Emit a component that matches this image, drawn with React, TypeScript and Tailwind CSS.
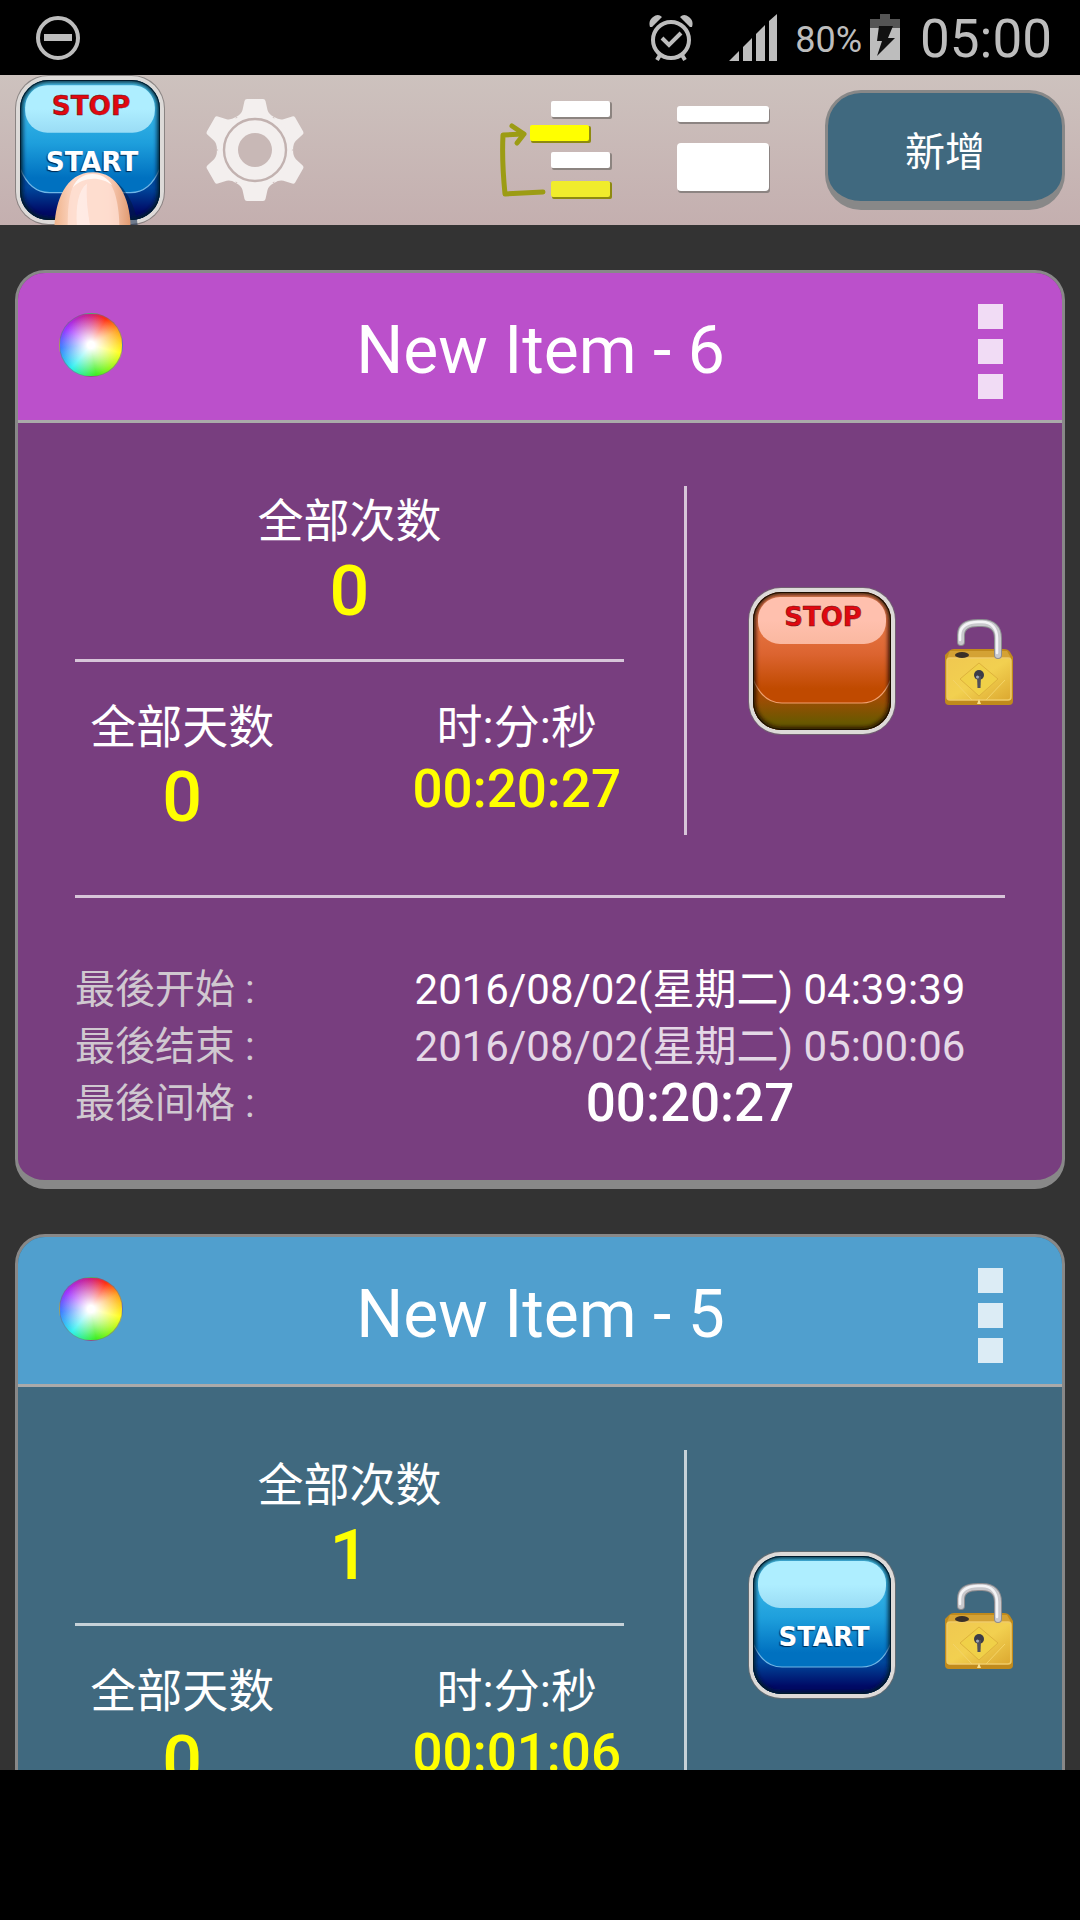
import { useId } from "react";

type Action = "stop" | "start";

interface TimerItem {
  id: number;
  title: string;
  headerClass: string;
  bodyClass: string;
  action: Action;
  count: string;
  days: string;
  time: string;
  last?: { start: string; end: string; interval: string };
}

const items: TimerItem[] = [
  {
    id: 6,
    title: "New Item - 6",
    headerClass: "bg-[#bb50cb]",
    bodyClass: "bg-[#783e7f]",
    action: "stop",
    count: "0",
    days: "0",
    time: "00:20:27",
    last: {
      start: "2016/08/02(星期二) 04:39:39",
      end: "2016/08/02(星期二) 05:00:06",
      interval: "00:20:27",
    },
  },
  {
    id: 5,
    title: "New Item - 5",
    headerClass: "bg-[#509fce]",
    bodyClass: "bg-[#40697f]",
    action: "start",
    count: "1",
    days: "0",
    time: "00:01:06",
  },
];

const palettes = {
  blue: {
    top: "#4cc8f0",
    middle: "#1e9fdc",
    bottom: "#0071c0",
    base: "#00489c",
    baseEnd: "#000a66",
    glossTop: "#aeeeff",
    glossBottom: "#9adcf5",
    curve: "#6fb6e6",
    edge: "#001a2c",
  },
  red: {
    top: "#f08858",
    middle: "#dc6430",
    bottom: "#c04a00",
    base: "#a04c04",
    baseEnd: "#6a5800",
    glossTop: "#ffc0ae",
    glossBottom: "#fab8a0",
    curve: "#f0a070",
    edge: "#1c0c00",
  },
};

/* Glossy square used by the logo and by the start / stop buttons */
function GlossyTile({ color, stop, start, finger }: { color: "blue" | "red"; stop?: boolean; start?: boolean; finger?: boolean }) {
  const id = useId();
  const c = palettes[color];
  return (
    <svg viewBox="0 0 148 148" className="block h-full w-full overflow-hidden">
      <defs>
        <linearGradient id={`${id}face`} x1="0" y1="0" x2="0" y2="1">
          <stop offset="0" stopColor={c.top} />
          <stop offset="0.45" stopColor={c.middle} />
          <stop offset="0.7" stopColor={c.bottom} />
          <stop offset="1" stopColor={c.bottom} />
        </linearGradient>
        <linearGradient id={`${id}base`} x1="0" y1="0" x2="0" y2="1">
          <stop offset="0" stopColor={c.base} />
          <stop offset="0.4" stopColor={c.base} />
          <stop offset="0.85" stopColor={c.baseEnd} />
        </linearGradient>
        <linearGradient id={`${id}gloss`} x1="0" y1="0" x2="0" y2="1">
          <stop offset="0" stopColor={c.glossTop} />
          <stop offset="0.5" stopColor={c.glossTop} />
          <stop offset="1" stopColor={c.glossBottom} />
        </linearGradient>
        <linearGradient id={`${id}skin`} x1="0" y1="0" x2="1" y2="0">
          <stop offset="0" stopColor="#f0b48c" />
          <stop offset="0.25" stopColor="#fcd6c4" />
          <stop offset="0.7" stopColor="#fbd0bc" />
          <stop offset="1" stopColor="#e09a70" />
        </linearGradient>
        <clipPath id={`${id}clip`}>
          <rect x="5" y="5" width="138" height="138" rx="28" />
        </clipPath>
        <filter id={`${id}soft`} x="-10%" y="-10%" width="120%" height="120%">
          <feGaussianBlur stdDeviation="2" />
        </filter>
      </defs>
      <rect x="0" y="0" width="148" height="148" rx="33" fill="#6f6c6c" opacity="0.7" />
      <rect x="1" y="1" width="146" height="146" rx="32" fill="#dddad8" />
      <g clipPath={`url(#${id}clip)`}>
        <rect x="5" y="5" width="138" height="138" fill={`url(#${id}face)`} />
        <path d="M5 90C10 106 20 116 34 116H114C128 116 138 106 143 90V143H5Z" fill={`url(#${id}base)`} />
        <path d="M5 92C11 107 20 116 34 116H114C128 116 137 107 143 92" fill="none" stroke={c.curve} strokeWidth="1.2" />
        <rect x="5" y="5" width="138" height="138" rx="28" fill="none" stroke={c.edge} strokeWidth="5" filter={`url(#${id}soft)`} />
        <rect x="5" y="5" width="138" height="138" rx="28" fill="none" stroke={c.edge} strokeWidth="2" />
      </g>
      <rect x="10" y="10" width="128" height="47" rx="22" fill={`url(#${id}gloss)`} />
      {stop && (
        <text x="75" y="39" textAnchor="middle" className="fill-[#e00810] stroke-[#5c1010] font-['DejaVu_Sans',sans-serif] text-[26px] font-bold" strokeWidth="0.5">
          STOP
        </text>
      )}
      {start && (
        <text x="76" y="95" textAnchor="middle" className="fill-white font-['DejaVu_Sans',sans-serif] text-[26px] font-bold [text-shadow:-1px_1px_1px_rgba(0,20,50,0.8)]">
          START
        </text>
      )}
      {finger && (
        <>
          <path d="M112 148C112 130 106 114 98 104C110 112 120 132 121 148Z" fill="#001a40" opacity="0.5" />
          <path d="M39 148C40 126 49 96 77 96C102 96 113 122 114 148Z" fill={`url(#${id}skin)`} />
          <path d="M52 148C52 118 56 98 77 97C95 98 102 118 103 148Z" fill="#ffe0d4" opacity="0.75" />
          <path d="M57 111C63 94 87 93 96 109C85 100 68 100 57 111Z" fill="#fff8f4" />
          <path d="M61 148C60 130 62 114 71 107C70 122 72 136 74 148Z" fill="#ffeee8" opacity="0.8" />
        </>
      )}
    </svg>
  );
}

function GearIcon() {
  return (
    <svg viewBox="-52 -52 104 104" className="block h-[104px] w-[104px]">
      <g fill="#f3efee">
        {[0, 60, 120, 180, 240, 300].map((deg) => (
          <path
            key={deg}
            transform={`rotate(${deg})`}
            d="M-8 -51Q-10 -51 -10.500 -49L-12.500 -40Q-13.500 -36 -19 -33L0 -25L19 -33Q13.500 -36 12.500 -40L10.500 -49Q10 -51 8 -51Z"
          />
        ))}
        <circle r="37" />
      </g>
      <circle r="17" fill="#c8b8b6" />
      <circle r="31" fill="none" stroke="#c2b2b0" strokeWidth="2.400" />
    </svg>
  );
}

function SortIcon() {
  return (
    <svg viewBox="0 0 114 100" className="block h-[100px] w-[114px]">
      <g fill="#8c8480">
        <rect x="53" y="2" width="60" height="17" rx="2" />
        <rect x="53" y="53" width="60" height="17" rx="2" />
      </g>
      <g fill="#8e8a10">
        <rect x="32" y="26" width="60" height="17" rx="2" />
        <rect x="53" y="82" width="60" height="17" rx="2" />
      </g>
      <rect x="52" y="1" width="59" height="16" rx="2" fill="#fff" />
      <rect x="31" y="25" width="59" height="16" rx="2" fill="#ffff00" />
      <rect x="52" y="52" width="59" height="16" rx="2" fill="#fff" />
      <rect x="52" y="81" width="59" height="16" rx="2" fill="#f0ec2c" />
      <g fill="none" stroke="#9c9c14" strokeWidth="5" strokeLinecap="round" strokeLinejoin="round">
        <path d="M44 92L24 93L6 94C4 74 3 54 4 35L24 34" />
        <path d="M13 26L25 34L18 43" />
      </g>
    </svg>
  );
}

function ListIcon() {
  return (
    <svg viewBox="0 0 94 88" className="block h-[88px] w-[94px]">
      <g fill="#8c8482">
        <rect x="1" y="2" width="92" height="16" rx="3" />
        <rect x="1" y="39" width="92" height="48" rx="3" />
      </g>
      <rect x="0" y="0" width="92" height="16" rx="3" fill="#fff" />
      <rect x="0" y="37" width="92" height="48" rx="4" fill="#fff" />
    </svg>
  );
}

function LockIcon() {
  const id = useId();
  return (
    <svg viewBox="0 0 70 90" className="block h-[90px] w-[70px]">
      <defs>
        <linearGradient id={`${id}gold`} x1="0" y1="0" x2="1" y2="1">
          <stop offset="0" stopColor="#f0c850" />
          <stop offset="0.5" stopColor="#f2d050" />
          <stop offset="1" stopColor="#dca830" />
        </linearGradient>
      </defs>
      <path d="M5 35Q7 33 10 33H60Q64 33 66 36L69 41V85Q69 89 65 89H5Q1 89 1 85V39Z" fill="#c08a1c" />
      <path d="M6 35H63L67 42H3Z" fill="#d4a234" />
      <rect x="3" y="42" width="64" height="42" rx="3" fill={`url(#${id}gold)`} stroke="#efcc68" strokeWidth="1.500" />
      <path d="M35 47L54 63L35 80L16 63Z" fill="#f0d048" stroke="#deb23c" strokeWidth="1" />
      <path d="M9 64L28 84M61 64L42 84" stroke="#f4d468" strokeWidth="1" />
      <path d="M33 88L35 83L37 88Z" fill="#f8e090" />
      <ellipse cx="18" cy="39" rx="7" ry="3" fill="#3a3028" />
      <path d="M17 26V19C17 10 24 7 34 7H38C49 7 54 13 54 22V39" fill="none" stroke="#8c8c90" strokeWidth="8" strokeLinecap="round" />
      <path d="M17 26V19C17 10 24 7 34 7H38C49 7 54 13 54 22V39" fill="none" stroke="#c8c8cc" strokeWidth="6" strokeLinecap="round" />
      <path d="M16 24V19C16 10 24 6 34 6H38C48 6 53 13 53 22V37" fill="none" stroke="#f4f4f6" strokeWidth="2.500" strokeLinecap="round" />
      <circle cx="35" cy="59" r="5" fill="#3c3c48" />
      <path d="M33 60H37L36.500 72H33.500Z" fill="#50505a" />
      <circle cx="33.500" cy="61" r="1.500" fill="#a0a8b8" />
    </svg>
  );
}

function StatusBar() {
  return (
    <div className="flex h-[75px] shrink-0 items-center bg-black pr-7 pl-9 text-[#bdbdbd]">
      <svg viewBox="0 0 44 44" className="h-11 w-11">
        <circle cx="22" cy="22" r="20" fill="none" stroke="currentColor" strokeWidth="4" />
        <rect x="8" y="18" width="28" height="7" fill="currentColor" />
      </svg>
      <div className="flex-1" />
      <svg viewBox="0 0 44 48" className="h-12 w-11">
        <g fill="none" stroke="currentColor" strokeWidth="4">
          <circle cx="22" cy="26" r="18" />
          <path d="M13 24L20 31L32 19" />
          <path d="M11 41L8 46M33 41L36 46" />
        </g>
        <path d="M1 13Q-1 7 4 3Q9 -1 13 3L3 13ZM43 13Q45 7 40 3Q35 -1 31 3L41 13Z" fill="currentColor" />
      </svg>
      <svg viewBox="0 0 48 48" className="ml-9 h-12 w-12" fill="currentColor">
        <path d="M0 47L10 37V47ZM14 33L23 24V47H14ZM27 20L36 11V47H27ZM40 7L48 0V47H40Z" />
      </svg>
      <span className="ml-[18px] pt-1 text-[36px] leading-none">80%</span>
      <svg viewBox="0 0 30 48" className="ml-2 h-12 w-[30px]">
        <path d="M10 0H20V5H30V14H0V5H10Z" fill="#555" />
        <rect x="0" y="14" width="30" height="32" fill="currentColor" />
        <path d="M9 12H23L18 24H25L7 42L12 27H7Z" fill="#111" />
      </svg>
      <span className="ml-5 pt-1 text-[53px] leading-none">05:00</span>
    </div>
  );
}

function Toolbar() {
  return (
    <header className="flex h-[150px] shrink-0 items-center bg-linear-to-b from-[#cdc2be] to-[#c4afaf] px-[15px]">
      <button type="button" aria-label="STOP START" className="h-[150px] w-[150px]">
        <GlossyTile color="blue" stop start finger />
      </button>
      <button type="button" aria-label="Settings" className="ml-[38px]">
        <GearIcon />
      </button>
      <div className="flex-1" />
      <button type="button" aria-label="Sort">
        <SortIcon />
      </button>
      <button type="button" aria-label="View" className="ml-16">
        <ListIcon />
      </button>
      <button
        type="button"
        className="ml-[54px] h-[120px] w-60 rounded-[36px] border-[3px] border-b-[9px] border-[#888] bg-[#40697f] pt-3 text-[40px] text-white"
      >
        新增
      </button>
    </header>
  );
}

function Stat({ label, value, small }: { label: string; value: string; small?: boolean }) {
  return (
    <div className="text-center">
      <div className="text-[46px] leading-[70px] text-white">{label}</div>
      {small ? (
        <div className="text-[53px] leading-[54px] font-medium text-[#ffff00]">{value}</div>
      ) : (
        <div className="text-[70px] leading-[70px] font-medium text-[#ffff00]">{value}</div>
      )}
    </div>
  );
}

function TimerCard({ item }: { item: TimerItem }) {
  return (
    <section className={`shrink-0 overflow-hidden rounded-[30px] border-[3px] border-b-[9px] border-[#888] ${item.bodyClass}`}>
      <div className={`flex h-[150px] items-center border-b-[3px] border-[#aaa] pr-[59px] pl-[41px] ${item.headerClass}`}>
        <button
          type="button"
          aria-label="Color"
          className="mb-1 h-16 w-16 rounded-full border border-gray-500/60 bg-[radial-gradient(circle,white_8%,transparent_68%),conic-gradient(#d02080,#ff3010_30deg,#ffa020_60deg,#ffff20_105deg,#40f020_170deg,#30f0f0_220deg,#4080ff_265deg,#a030ff_305deg,#d02080)]"
        />
        <h2 className="flex-1 pt-2 text-center text-[66px] leading-none text-white">{item.title}</h2>
        <button type="button" aria-label="Menu" className="ml-5 flex flex-col gap-[10px] pt-[10px]">
          <span className="h-[25px] w-[25px] bg-white/80" />
          <span className="h-[25px] w-[25px] bg-white/80" />
          <span className="h-[25px] w-[25px] bg-white/80" />
        </button>
      </div>

      <div className="px-[57px] pt-[63px] pb-12">
        <div className="flex">
          <div className="flex-1 pb-[3px]">
            <Stat label="全部次数" value={item.count} />
            <div className="mt-[33px] mb-[30px] h-[3px] bg-white/70" />
            <div className="grid grid-cols-2 gap-x-[120px]">
              <Stat label="全部天数" value={item.days} />
              <Stat label="时:分:秒" value={item.time} small />
            </div>
          </div>
          <div className="ml-[60px] w-[3px] bg-white/70" />
          {/* the lock reaches past the right padding of the body */}
          <div className="-mr-[9px] flex w-[327px] items-center justify-between pl-[61px]">
            <button type="button" aria-label={item.action.toUpperCase()} className="h-[148px] w-[148px]">
              <GlossyTile color={item.action === "stop" ? "red" : "blue"} stop={item.action === "stop"} start={item.action === "start"} />
            </button>
            <button type="button" aria-label="Lock">
              <LockIcon />
            </button>
          </div>
        </div>

        {item.last && (
          <>
            <div className="mt-[60px] mb-[63px] h-[3px] bg-white/70" />
            <dl className="grid grid-cols-[300px_1fr] text-[40px] leading-[57px]">
              <dt className="text-[#d0c8d0]">最後开始 :</dt>
              <dd className="text-center text-[42px] text-white">{item.last.start}</dd>
              <dt className="text-[#d0c8d0]">最後结束 :</dt>
              <dd className="text-center text-[42px] text-[#e4d8e6]">{item.last.end}</dd>
              <dt className="text-[#d0c8d0]">最後间格 :</dt>
              <dd className="text-center text-[53px] font-medium text-white">{item.last.interval}</dd>
            </dl>
          </>
        )}
      </div>
    </section>
  );
}

export default function App() {
  return (
    <div className="flex h-screen flex-col bg-black font-['Roboto','Noto_Sans_CJK_SC',sans-serif]">
      <StatusBar />
      <Toolbar />
      <main className="flex min-h-0 flex-1 flex-col gap-[45px] overflow-hidden bg-[#333] px-[15px] pt-[45px]">
        {items.map((item) => (
          <TimerCard key={item.id} item={item} />
        ))}
      </main>
      <div className="h-[150px] shrink-0 bg-black" />
    </div>
  );
}
